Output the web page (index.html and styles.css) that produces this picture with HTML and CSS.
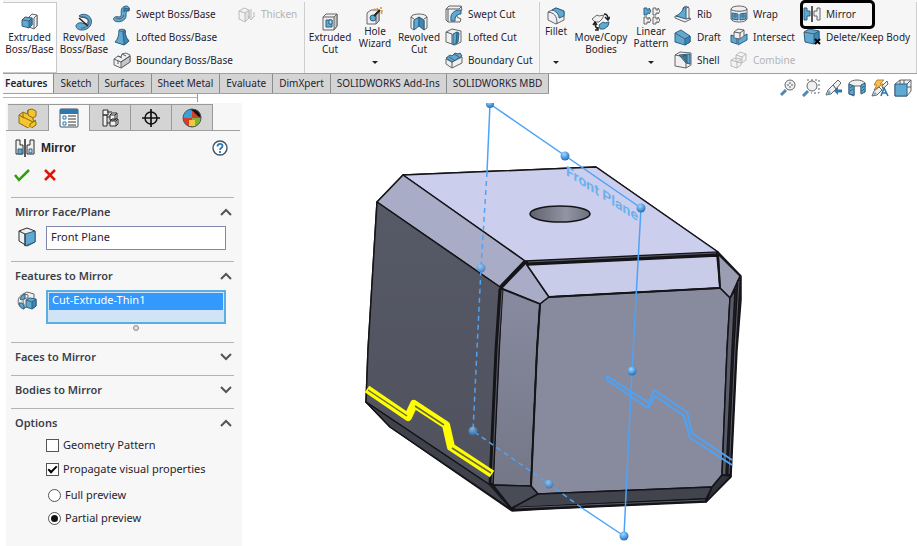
FILE: index.html
```html
<!DOCTYPE html>
<html lang="en">
<head>
<meta charset="utf-8">
<title>SOLIDWORKS - Mirror</title>
<link rel="stylesheet" href="styles.css">
</head>
<body>
<svg class="defs" aria-hidden="true">
  <defs>
    <radialGradient id="ball" cx="40%" cy="30%" r="70%"><stop offset="0" stop-color="#a5d5fa"/><stop offset=".5" stop-color="#5aa5e6"/><stop offset="1" stop-color="#2b6fae"/></radialGradient>
    <linearGradient id="bore"><stop offset="0" stop-color="#60626e"/><stop offset=".6" stop-color="#9294a4"/><stop offset="1" stop-color="#6e707d"/></linearGradient>
    <linearGradient id="left" x1="0" y1="0" x2="0" y2="1"><stop offset="0" stop-color="#565966"/><stop offset="1" stop-color="#50525e"/></linearGradient>
    <linearGradient id="bevel" x1="0" y1="0" x2="0" y2="1"><stop offset="0" stop-color="#888ba0"/><stop offset="1" stop-color="#747786"/></linearGradient>
  </defs>
</svg>

<header class="ribbon">
  <button class="big boss active"><svg viewBox="0 0 18 18"><path class="w" d="M8 4l3-3 5 1v11l-3 3-5-2z"/><path class="w" d="M13 5l3-3v11l-3 3z"/><path class="b" d="M1 7l3-3 7 1v7l-3 3-7-2z"/><path class="d" d="M8 8l3-3v7l-3 3z"/><path class="n" d="M1 7l7 1"/></svg><span>Extruded<br>Boss/Base</span></button>
  <button class="big boss"><svg viewBox="0 0 18 18"><path class="b" d="M4 3c3-3 10-2 12 3 2 6-3 11-9 11-4 0-6-2-6-4s3-4 6-3l3 1c3 0 4-3 2-5S6 5 4 3z"/><path class="n" d="M5 4c5-1 9 1 9 5s-4 6-8 6"/><path class="n k" d="M4 5l9 8"/></svg><span>Revolved<br>Boss/Base</span></button>
  <div class="list wide">
    <button><svg viewBox="0 0 18 18"><path class="b" d="M2 12c3-1 5 1 6-1S6 2 13 1c3 0 4 3 3 5-3-1-3 2-3 5 0 5-8 7-11 5-2-1-2-3 0-4z"/><path class="d" d="M11 3c3 1 4 1 5 0 0 2 0 3-1 3-2-1-3 0-4 1z"/><path class="n" d="M3 13c4 2 7 0 8-3"/></svg>Swept Boss/Base</button>
    <button><svg viewBox="0 0 18 18"><path class="b" d="M6 2c2-1 4-1 6 0 0 5 1 8 4 11l-5 4-9-3c3-3 4-7 4-12z"/><path class="d" d="M10 4c0 5 1 8 1 13l5-4c-3-3-4-6-4-11z"/><path class="n" d="M6 2c2 2 4 2 6 0"/></svg>Lofted Boss/Base</button>
    <button><svg viewBox="0 0 18 18"><path class="w" d="M1 8l4-3 3 1 1-3 4-1 4 2v7l-9 6-7-3z"/><path class="g" d="M8 11l9-6v6l-9 6z"/><path class="n" d="M1 8l7 3 9-6M5 5l4 2M9 3l4 2M5 10v3"/></svg>Boundary Boss/Base</button>
  </div>
  <div class="list thick">
    <button disabled><svg viewBox="0 0 18 18"><path class="w" d="M1 6l5-3 5 2v8l-4 4-6-3z"/><path class="g" d="M7 8l4-3v8l-4 4z"/><path class="n" d="M1 6l6 2M13 4v9m-3-2l3 4 3-4M16 7v5"/></svg>Thicken</button>
  </div>
  <button class="big cut"><svg viewBox="0 0 18 18"><path class="w" d="M2 4l3-3h11v12l-3 4H2z"/><path class="g" d="M13 4l3-3v12l-3 4z"/><path class="n" d="M2 4h11"/><path class="b" d="M5 7h6v7H5z"/><path class="l" d="M8 7h3v4H8z"/></svg><span>Extruded<br>Cut</span></button>
  <button class="big top hole"><svg viewBox="0 0 18 18"><path class="w" d="M1 6l4-3h8v11l-3 3H1z"/><path class="g" d="M10 6l3-3v11l-3 3z"/><circle class="b" cx="7" cy="11" r="3"/><path d="M8 9l6-6" stroke="#222" stroke-width="2"/><path d="M11 1l1 2M15 0v2M17 4h-2M8 2l2 1M16 7l-1-2" stroke="#e8951b" stroke-width="1.6"/></svg><span>Hole<br>Wizard</span><i></i></button>
  <button class="big rcut"><svg viewBox="0 0 18 18"><path class="w" d="M1 4c1-4 15-4 16 0v11l-3 2V8L9 5 4 8v9l-3-2z"/><path class="b" d="M4 7l5-3v9l-5 4z"/><path class="d" d="M9 4l5 3v10l-5-4z"/><path class="n" d="M1 4l3 2M17 4l-3 2"/></svg><span>Revolved<br>Cut</span></button>
  <div class="list cuts">
    <button><svg viewBox="0 0 18 18"><path class="w" d="M1 4l3-3h12l1 4-5 3v4l4 2-1 3H3l-2-2z"/><path class="b" d="M6 16c-1-7 2-11 10-11v4c-5 0-6 3-6 7z"/><path class="n" d="M1 4h13l3-3M3 4v13"/></svg>Swept Cut</button>
    <button><svg viewBox="0 0 18 18"><path class="w" d="M1 4l6-3 9 2v11l-6 3-9-3z"/><path class="n" d="M1 4l6 2v10"/><path class="b" d="M8 6l4-2v11l-4 2z"/><path class="d" d="M12 4l2 1-1 9-2 1z"/></svg>Lofted Cut</button>
    <button><svg viewBox="0 0 18 18"><path class="w" d="M1 8l6 3 10-5v6L7 17l-6-4z"/><path class="b" d="M1 7l4-3 2 1 3-3 3 1 2-1 2 3-10 6z"/><path class="n" d="M4 6l5 3M9 3l5 3M7 11v6"/></svg>Boundary Cut</button>
  </div>
  <button class="big top fillet"><svg viewBox="0 0 18 18"><path class="w" d="M1 5l8-4 8 3v9l-8 4-8-4z"/><path class="b" d="M5 3l4-2 8 3v5l-5 2c0-4-3-7-7-8z"/><path class="n" d="M1 5c6 1 9 3 9 12"/></svg><span>Fillet</span><i></i></button>
  <button class="big move"><svg viewBox="0 0 18 18"><path class="w" d="M0 6l5-4 2 1 5-1-2 4-3 3H3z"/><path class="b" d="M7 12l4-3 2 1 4-1-1 4-4 3H8z"/><path class="n k" d="M12 1c3 0 4 2 4 5m-3-2l3 3 2-3M3 10c0 4 1 5 3 6m-3 1h3v-3M1 12l2-3 2 3"/></svg><span>Move/Copy<br>Bodies</span></button>
  <button class="big top pattern"><svg viewBox="0 0 18 18"><path class="b" d="M2 1h3v2h2V1l2 3-2 3V6H5v2H2z"/><path class="w" d="M11 1h3v2h2V1l2 3-2 3V6h-2v2h-3zM2 10h3v2h2v-2l2 3-2 3v-1H5v2H2zM11 10h3v2h2v-2l2 3-2 3v-1h-2v2h-3z"/></svg><span>Linear<br>Pattern</span><i></i></button>
  <div class="list ribs">
    <button><svg viewBox="0 0 18 18"><path class="w" d="M9 3l3-2 3 2v10l2 1-6 3-10-4v-2l8 1z"/><path class="b" d="M2 11C6 9 9 6 10 2l2 1v11z"/><path class="n" d="M12 3l3-1M12 14l4-1"/></svg>Rib</button>
    <button><svg viewBox="0 0 18 18"><path class="b" d="M1 5l6-3 9 6v6l-5 3-10-3z"/><path class="d" d="M11 11l5-3v6l-5 3z"/><path class="n" d="M1 5l10 6"/></svg>Draft</button>
    <button><svg viewBox="0 0 18 18"><path class="w" d="M1 4l5-3 11 1v12l-5 3-11-2z"/><path class="b" d="M5 4l11-1v10l-4-1z"/><path class="d" d="M8 5l5-1v8z"/><path class="n" d="M1 4l11 2v11"/></svg>Shell</button>
  </div>
  <div class="list wraps">
    <button><svg viewBox="0 0 18 18"><path class="w" d="M1 4c1-4 15-4 16 0v10c-1 4-15 4-16 0z"/><path class="n" d="M1 4c1 3 15 3 16 0"/><path class="b" d="M2 8l6 1v6l-6-1zM10 9l6-1v6l-6 1z"/><path class="l" d="M4 10h2v2H4zM12 10h2v2h-2z"/></svg>Wrap</button>
    <button><svg viewBox="0 0 18 18"><path class="b" d="M1 7l6 2v7l-6-2zM8 11l9-5v6l-9 5z"/><path class="w" d="M4 4l4-3 6 1v6l-4 3-6-1z"/><path class="n" d="M4 4l6 1v6M10 5l4-3"/></svg>Intersect</button>
    <button disabled><svg viewBox="0 0 18 18"><path class="w" d="M6 4l4-3 6 2v6l-4 3-6-1zM1 9l4-2 6 1v6l-4 3-6-2z"/><path class="n" d="M6 4l6 2v6M12 6l4-3M1 9l6 2v6M7 11l4-3"/></svg>Combine</button>
  </div>
  <div class="list bodies">
    <button class="mirror"><svg viewBox="0 0 18 18"><path class="b" d="M1 3h3v3h3v5H4v4H1z"/><path class="n k" d="M9 1v16"/><path class="w" d="M17 3h-3v3h-3v5h3v4h3z"/></svg>Mirror</button>
    <button><svg viewBox="0 0 18 18"><path class="b" d="M1 4l5-3 10 2v9l-5 4-9-2z"/><path class="d" d="M11 6l5-3v9l-5 4z"/><path class="n" d="M1 4l10 2"/><path d="M12 11l5 5m0-5l-5 5" stroke="#000" stroke-width="2"/></svg>Delete/Keep Body</button>
  </div>
</header>

<div class="bar">
  <nav class="tabs">
    <a href="#" class="on">Features</a><a href="#">Sketch</a><a href="#">Surfaces</a><a href="#">Sheet Metal</a><a href="#">Evaluate</a><a href="#">DimXpert</a><a href="#">SOLIDWORKS Add-Ins</a><a href="#">SOLIDWORKS MBD</a>
  </nav>
  <div class="splitter"></div>
  <div class="view">
    <button aria-label="Zoom to fit"><svg viewBox="0 0 18 18"><path d="M7 11l-5 5" stroke="#4f87b5" stroke-width="3"/><circle class="w" cx="11" cy="6" r="5"/><path class="n" d="M11 3v6M8 6h6" stroke-dasharray="2 2"/></svg></button>
    <button aria-label="Zoom to area"><svg viewBox="0 0 18 18"><path class="n" d="M5 1h12v13H9" stroke-dasharray="2 2"/><path d="M6 12l-5 5" stroke="#4f87b5" stroke-width="3"/><circle class="w" cx="10" cy="7" r="5"/></svg></button>
    <button aria-label="Previous view"><svg viewBox="0 0 18 18"><path class="w" d="M8 6l5-5 3 3-5 6z"/><path class="w" d="M8 6l3 4-5 5-5 1 2-5z"/><path d="M4 11l2 3-4 2z" fill="#5ea5cf"/><path d="M17 12h-5" stroke="#2f78ad" stroke-width="3"/><path d="M9 12l4-4v8z" fill="#2f78ad"/></svg></button>
    <button aria-label="Section view"><svg viewBox="0 0 18 18"><path class="w" d="M1 4c3-4 13-4 16 0v9l-4 1V7H6v10l-5-2z"/><path class="b" d="M1 5l5 2v9l-5-1zM13 6l4-2v9l-4 2z"/><path class="l" d="M2 9l3-2M2 12l3-2M14 9l2-2M14 12l2-2"/></svg></button>
    <button aria-label="View orientation"><svg viewBox="0 0 18 18"><path d="M6 1h7l-4 4h3l-9 6 3-5H3z" fill="#f8c04e" stroke="#b98532"/><path class="w" d="M11 7l5-5 1 3-5 5z"/><path class="w" d="M8 8l3 3-5 5-5 1 2-5z"/><path d="M4 13l2 2-4 1z" fill="#5ea5cf"/><path class="n blue" d="M10 17l3-8 4 8m-6-3h5"/></svg></button>
    <button aria-label="Display style"><svg viewBox="0 0 18 18"><path class="w" d="M1 5l5-4h11v11l-4 5H1z"/><path class="n" d="M13 5l4-4M6 1v4M10 1v4M13 8h4"/><path class="b" d="M1 5h12v12H1z"/></svg></button>
  </div>
</div>

<main class="work">
  <aside class="panel">
    <div class="ptabs">
      <button aria-label="Feature tree"><svg viewBox="0 0 20 20"><path d="M1 7l4-3 4 2 1-4 4-1 4 2v5l-3 2v2l3 2v3l-6 4-11-6z" fill="#f5c431" stroke="#8c6914"/><path d="M5 4v5l10 5 3-2M10 2v5l5 3M1 7l5 3M15 14l-3 2v3" fill="none" stroke="#8c6914"/></svg></button>
      <button aria-label="Property manager" class="on"><svg viewBox="0 0 20 20"><rect x="1" y="1" width="18" height="18" rx="1" fill="#fff" stroke="#3b5060"/><path d="M1 1h18v5H1z" fill="#2d79ae"/><path d="M4 8h3v3H4zM4 14h3v3H4z" fill="#fff" stroke="#2d79ae"/><path d="M9 8h8M9 11h8M9 14h8M9 17h8" stroke="#333"/></svg></button>
      <button aria-label="Configurations"><svg viewBox="0 0 20 20"><path class="w dark" d="M3 2h5v5H3zM3 7h4v11H3zM10 7l2-2h5v5l-2 2h-5zM10 13l2-2h6v5l-2 2h-6z"/><path class="n dark" d="M7 4h5M7 9h3M7 15h3M10 7h5v5M15 7l2-2M10 13h6v5M16 13l2-2"/></svg></button>
      <button aria-label="Dimensions"><svg viewBox="0 0 20 20"><circle cx="10" cy="10" r="6" fill="none" stroke="#111" stroke-width="1.5"/><path d="M10 1v18M1 10h18" stroke="#111" stroke-width="1.7"/></svg></button>
      <button aria-label="Appearances"><svg viewBox="0 0 20 20"><circle cx="10" cy="10" r="9" fill="#f0b32c"/><path d="M10 10L1 10A9 9 0 0 1 10 1z" fill="#3aa0d8"/><path d="M10 10V1a9 9 0 0 1 9 9z" fill="#d83a2b"/><path d="M10 10v9A9 9 0 0 1 1 10z" fill="#d93a2a"/><path d="M10 10h9a9 9 0 0 1-9 9z" fill="#77b63e"/><path d="M7 12h6v6H7z" fill="#efca3c"/><path d="M11 2c3 2 4 5 7 6-1-4-3-6-7-6z" fill="#fff" stroke="#111" stroke-width="2"/><circle cx="10" cy="10" r="9" fill="none" stroke="#555"/></svg></button>
    </div>
    <div class="title">
      <svg viewBox="0 0 20 20"><path class="w dark" d="M1 2h4v5h3v9H1zM19 2h-4v5h-3v9h7z"/><path class="b" d="M3 11h4v5H3z"/><path class="l" d="M14 11h3v4h-3z"/><path class="n k" d="M10 1v18"/></svg>
      <h1>Mirror</h1>
      <button class="help" aria-label="Help"><svg viewBox="0 0 16 16"><circle cx="8" cy="8" r="7" fill="#fff" stroke="#3d5568" stroke-width="1.4"/><path d="M5.500 6.500C5.500 3 10.500 3 10.500 6c0 2-2.500 2-2.500 4M8 11v2" fill="none" stroke="#2d79ae" stroke-width="1.8"/></svg></button>
    </div>
    <div class="okrow">
      <button aria-label="OK"><svg viewBox="0 0 16 16"><path d="M1 8l4 5L15 3" fill="none" stroke="#2f9e0d" stroke-width="2.500"/></svg></button>
      <button aria-label="Cancel"><svg viewBox="0 0 16 16"><path d="M3 3l10 10M13 3L3 13" fill="none" stroke="#e0160c" stroke-width="2.500"/></svg></button>
    </div>

    <section class="face">
      <h2><label for="plane">Mirror Face/Plane</label><svg viewBox="0 0 12 8"><path d="M1 7l5-5 5 5"/></svg></h2>
      <div class="field"><svg viewBox="0 0 20 20"><path class="w dark" d="M2 4l8-3 8 3v11l-8 4-8-5z"/><path class="b" d="M8 7l10-3v11l-10 4z"/><path class="n dark" d="M2 4l6 3v12"/></svg><input id="plane" type="text" value="Front Plane"></div>
    </section>
    <section class="feat">
      <h2>Features to Mirror<svg viewBox="0 0 12 8"><path d="M1 7l5-5 5 5"/></svg></h2>
      <div class="field"><svg viewBox="0 0 20 20"><path class="w" d="M6 3l4-2 7 2v4l-9 10-3-1z"/><path class="w" d="M8 3c-9 1-9 13-1 15V13c-2-2-1-6 4-6V4z"/><path class="b" d="M3 8c1-3 3-4 5-5v4L5 9zM2 12h3l2 3v3c-3-1-5-3-5-6z"/><path class="b" d="M9 9l4-2 6 1v7l-4 3-6-2z"/><path class="d" d="M15 11l4-3v7l-4 3z"/><path class="n" d="M9 9l6 2"/></svg>
        <ul class="box" role="listbox" aria-label="Features to Mirror"><li role="option" aria-selected="true">Cut-Extrude-Thin1</li></ul></div>
      <span class="grip"></span>
    </section>
    <section class="closed"><h2>Faces to Mirror<svg viewBox="0 0 12 8"><path d="M1 1l5 5 5-5"/></svg></h2></section>
    <section class="closed"><h2>Bodies to Mirror<svg viewBox="0 0 12 8"><path d="M1 1l5 5 5-5"/></svg></h2></section>
    <section class="opts">
      <h2>Options<svg viewBox="0 0 12 8"><path d="M1 7l5-5 5 5"/></svg></h2>
      <label><input type="checkbox">Geometry Pattern</label>
      <label><input type="checkbox" checked>Propagate visual properties</label>
      <label class="radio first"><input type="radio" name="preview">Full preview</label>
      <label class="radio"><input type="radio" name="preview" checked>Partial preview</label>
    </section>
  </aside>

  <svg class="model" viewBox="242 103 675 443" preserveAspectRatio="xMinYMin meet" role="img" aria-label="Model preview">
    <g stroke="#141419" stroke-width="1.500" stroke-linejoin="round">
      <path fill="#26272e" d="M403 175L596 167 718 252 741 276V300L737 350 731 477 706 502 545 509 512 511 390 427 366 402 368 350 377 202z"/>
      <path fill="#ccceed" d="M403 175L596 167 718 252 525 261z"/>
      <path fill="#a9acc6" d="M403 175L525 261 500 287 377 202z"/>
      <path fill="url(#left)" d="M377 202L500 287 497 350 490 485 366 402 368 350z"/>
      <path fill="#3f414b" d="M366 402L490 485 512 510 390 427z"/>
      <path fill="#a9acc6" d="M525 262L549 297 540 304 501 288z"/>
      <path fill="#c8cce9" d="M527 265L717 256 720 288 549 297z"/>
      <path fill="#9b9eb2" d="M718 254L740 276 730 298 720 288z"/>
      <path fill="url(#bevel)" d="M502 289L540 304 537 350 531 486 493 485z"/>
      <path fill="#888b9e" d="M549 297L720 288 730 298 727 350 722 475 712 487 538 494 531 486 537 350 540 304z"/>
      <path fill="#595c69" d="M730 298L735 290 732 350 726 475 722 475 727 350z"/>
      <path fill="#494b56" d="M493 485L531 486 538 494 512 509z"/>
      <path fill="#42444d" d="M538 494L712 487 706 499 512 508z"/>
      <path fill="#30323a" d="M722 475L731 476 706 502 712 487z"/>
      <path fill="none" stroke-width="5" d="M501 289L497 350 491 485"/>
      <path fill="none" stroke-width="4" d="M526 263L717 254M739 280L735 350 729 476M525 262L501 287M512 509L706 500"/>
      <path fill="none" stroke-width="2" d="M549 297L720 288M540 304L537 350 531 486M718 254L720 288"/>
      <path fill="none" stroke="#5a5c67" stroke-width="1" d="M502 290L498 350 492 483M528 262L716 253M739 281L735 350 729 474M515 508L705 500"/>
      <ellipse cx="560" cy="214" rx="30" ry="8" fill="url(#bore)"/>
    </g>
    <g fill="none" stroke-linejoin="round">
      <path stroke="#ff0" stroke-width="8" d="M367 389L408 417 414 404 446 425 451 447 492 474"/>
      <path stroke="#66673f" stroke-width="1.500" d="M368 390L407 416M415 406L444 425M452 448L491 473"/>
      <g stroke="#4da3f7" stroke-width="2">
        <path d="M607 376L649 403 654 390 687 412 692 433 732 460"/>
        <path d="M607 376V380L648 408 655 396 684 416 690 438 732 465"/>
      </g>
      <g stroke="#4da3f7" stroke-width="1.500">
        <path d="M487 172L490 104 641 208 632 371 624 536 582 508"/>
        <path d="M487 172L481 268 473 431 549 484 582 508" stroke-dasharray="5 4"/>
      </g>
    </g>
    <g fill="url(#ball)">
      <circle cx="490" cy="104" r="4"/><circle cx="565" cy="156" r="4.500"/><circle cx="641" cy="208" r="4.500"/><circle cx="632" cy="371" r="4.500"/><circle cx="624" cy="536" r="4.500"/>
      <g opacity=".7"><circle cx="481" cy="268" r="4.500"/><circle cx="473" cy="431" r="4.500"/><circle cx="549" cy="484" r="4.500"/></g>
    </g>
    <text class="plane" transform="translate(566 175) skewY(33)">Front Plane</text>
  </svg>
</main>
</body>
</html>
```
FILE: styles.css
```css
*, *::before, *::after { box-sizing: border-box; }
html, body { height: 100%; }
body {
  margin: 0;
  display: flex;
  flex-direction: column;
  background: #fff;
  color: #1f2430;
  font: 11px/12px "Noto Sans", "Open Sans", sans-serif;
}
.defs { position: absolute; width: 0; height: 0; }
button {
  margin: 0;
  padding: 0;
  border: 0;
  background: none;
  color: inherit;
  font: inherit;
}
svg { display: block; flex: none; stroke-width: 1; }
.w { fill: #f0f0f0; stroke: #666; }
.g { fill: #c8c8c8; stroke: #666; }
.b { fill: #62a9d2; stroke: #2a6084; }
.d { fill: #3f86b0; stroke: #2a6084; }
.l { fill: #c3e0f0; stroke: #2a6084; }
.n { fill: none; stroke: #555e66; }
.k { stroke: #222; stroke-width: 1.5; }
.dark { stroke: #2c2c2c; }
.blue { stroke: #2f78ad; stroke-width: 1.6; }

/* Ribbon */
.ribbon {
  display: flex;
  height: 74px;
  margin-left: 3px;
  padding-top: 2px;
  background: #f6f6f6;
  border-bottom: 1px solid #a0a0a0;
  font-size: 10px;
}
.big {
  display: flex;
  flex-direction: column;
  align-items: center;
  flex: none;
  padding-top: 11px;
}
.big svg { width: 18px; height: 18px; }
.big span { white-space: nowrap; }
.top { padding-top: 5px; }
.big i {
  margin-top: auto;
  margin-bottom: 9px;
  border: 3px solid transparent;
  border-top-color: #222;
  border-bottom: 0;
}
.active { background: #fff; border: 1px solid #c9c9c9; border-left: 0; padding-top: 10px; }
.boss { width: 54px; }
.cut { width: 50px; }
.hole { width: 40px; }
.rcut { width: 48px; }
.fillet { width: 32px; }
.move { width: 58px; }
.pattern { width: 42px; }
.list { display: flex; flex-direction: column; flex: none; padding-left: 2px; }
.list button {
  display: flex;
  align-items: center;
  gap: 5px;
  height: 23px;
  white-space: nowrap;
  text-align: left;
}
.list svg { width: 18px; height: 18px; }
.wide { width: 125px; }
.thick { width: 69px; border-right: 1px solid #cfcfcf; }
.cuts { width: 97px; border-right: 1px solid #cfcfcf; }
.ribs { width: 56px; }
.wraps { width: 73px; }
.bodies { flex: 1; border-right: 1px solid #cfcfcf; }
button:disabled { color: #b4b4b4; }
button:disabled svg { opacity: .4; }
.mirror { position: relative; align-self: flex-start; }
.mirror::after {
  content: "";
  position: absolute;
  left: -3px;
  top: -2px;
  width: 75px;
  height: 29px;
  border: 3px solid #000;
  border-radius: 5px;
}

/* Command tabs and view toolbar */
.bar {
  display: flex;
  position: relative;
  justify-content: space-between;
  align-items: flex-start;
  height: 29px;
  padding: 0 5px 0 3px;
}
.tabs { display: flex; font-size: 10px; border-bottom: 1px solid #a0a0a0; }
.tabs a {
  padding: 3px 6px;
  background: #d4d4d4;
  border-right: 1px solid #8c8c8c;
  color: inherit;
  line-height: 13px;
  text-decoration: none;
  white-space: nowrap;
}
.tabs .on { padding-left: 2px; background: #f8f8f8; font-weight: 600; }
.splitter {
  position: absolute;
  left: 3px;
  top: 20px;
  width: 195px;
  height: 8px;
  border-right: 1px solid #999;
}
.splitter::before { content: ""; display: block; height: 4px; border-bottom: 1px solid #b5b5b5; }
.view { display: flex; gap: 5px; padding-top: 5px; }
.view svg { width: 18px; height: 18px; }

/* Workspace */
.work { display: flex; flex: 1; min-height: 0; }
.model { flex: 1; min-width: 0; width: 100%; height: 100%; }
.plane { font: 700 14px Roboto, sans-serif; fill: #6cb0ee; }
.panel { flex: none; width: 236px; margin-left: 6px; padding-right: 8px; background: #f7f7f7; }
.ptabs {
  display: flex;
  height: 28px;
  margin-right: -6px;
  padding: 1px 0 0 2px;
  border-bottom: 1px solid #a0a0a0;
}
.ptabs button {
  width: 41px;
  height: 26px;
  display: flex;
  align-items: center;
  justify-content: center;
  background: #d4d4d4;
  border: 1px solid #999;
  border-width: 1px 1px 0 0;
}
.ptabs .on { height: 27px; background: #f7f7f7; }
.ptabs svg { width: 20px; height: 20px; }
.title { display: flex; align-items: center; gap: 6px; height: 34px; padding: 0 6px 0 9px; }
.title svg { width: 20px; height: 20px; }
h1 { flex: 1; margin: 0; font: 700 12px "Liberation Sans", sans-serif; }
.title .help svg { width: 16px; height: 16px; }
.okrow { display: flex; gap: 12px; height: 32px; padding: 2px 8px 0; align-items: flex-start; }
.okrow svg { width: 16px; height: 16px; }
section { margin-left: 5px; padding-left: 4px; border-top: 1px solid #b4b4b4; }
.face { height: 64px; }
.feat { height: 81px; position: relative; }
.closed { height: 33px; }
h2 {
  display: flex;
  align-items: center;
  justify-content: space-between;
  height: 28px;
  margin: 0;
  padding-right: 2px;
  font: 600 11px/14px "Noto Sans", sans-serif;
  color: #3a3f48;
}
h2 svg { width: 12px; height: 8px; fill: none; stroke: #555; stroke-width: 2; }
.field { display: flex; align-items: flex-start; gap: 9px; padding-left: 2px; }
.field > svg { width: 20px; height: 20px; margin-top: 1px; }
.field input, .box {
  flex: 1;
  min-width: 0;
  margin: 0 8px 0 0;
  height: 24px;
  border: 1px solid #8087a8;
  background: #fff;
  font: inherit;
  color: inherit;
}
.field input { padding: 0 4px 4px; }
.box { height: 34px; padding: 1px; border: 2px solid #5aaee0; background: #d0e3f7; list-style: none; }
.box li { height: 17px; padding: 0 3px; background: #3399fd; color: #fff; line-height: 14px; }
.grip {
  position: absolute;
  left: 122px;
  top: 63px;
  width: 6px;
  height: 6px;
  border: 1px solid #8a8a8a;
  border-radius: 50%;
  background: #ddd;
}
.opts label { display: flex; align-items: center; gap: 4px; height: 16px; margin: 0 0 8px 31px; }
.opts .radio { margin: 0 0 7px 33px; }
.opts .first { padding-top: 2px; height: 18px; margin-top: 8px; }
.opts input {
  appearance: none;
  flex: none;
  display: grid;
  place-items: center;
  width: 13px;
  height: 13px;
  margin: 0;
  border: 1px solid #555;
  background: #fff;
}
.opts input[type=radio] { border-radius: 50%; }
input[type=radio]:checked::before { content: ""; width: 7px; height: 7px; border-radius: 50%; background: #111; }
input[type=checkbox]:checked::before {
  content: "";
  width: 9px;
  height: 5px;
  margin-bottom: 2px;
  border: solid #000;
  border-width: 0 0 2px 2px;
  transform: rotate(-45deg);
}
```
